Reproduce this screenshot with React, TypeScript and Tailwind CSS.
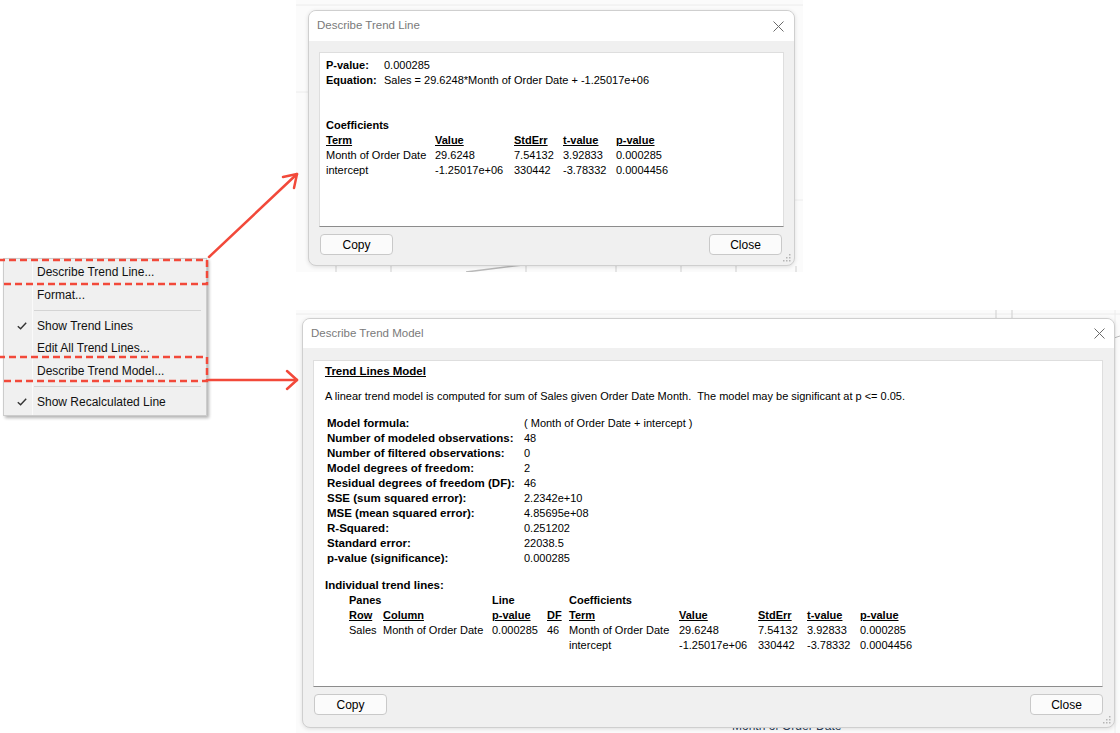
import React from "react";

const font = { fontFamily: '"Liberation Sans", Arial, sans-serif' };

function CloseGlyph() {
  return (
    <svg width="11" height="11" viewBox="0 0 11 11" className="block">
      <path d="M0.5 0.5 L10.5 10.5 M10.5 0.5 L0.5 10.5" stroke="#6a6a6a" strokeWidth="1" />
    </svg>
  );
}

function Grip() {
  return (
    <svg width="8" height="8" viewBox="0 0 8 8" className="absolute bottom-[3px] right-[3px]">
      <rect x="6" y="0" width="1.5" height="1.5" fill="#b5b5b5" />
      <rect x="3" y="3" width="1.5" height="1.5" fill="#b5b5b5" />
      <rect x="6" y="3" width="1.5" height="1.5" fill="#b5b5b5" />
      <rect x="0" y="6" width="1.5" height="1.5" fill="#b5b5b5" />
      <rect x="3" y="6" width="1.5" height="1.5" fill="#b5b5b5" />
      <rect x="6" y="6" width="1.5" height="1.5" fill="#b5b5b5" />
    </svg>
  );
}

function Check() {
  return (
    <svg width="10" height="8" viewBox="0 0 10 8" className="block">
      <path d="M0.8 4.2 L3.6 6.8 L9.2 0.8" fill="none" stroke="#333" strokeWidth="1.4" />
    </svg>
  );
}

function DlgButton({ label }: { label: string }) {
  return (
    <button
      type="button"
      className="h-[21px] w-[73px] rounded-[4px] border border-[#c9c9c9] bg-[#fbfbfb] text-[12px] text-black"
    >
      {label}
    </button>
  );
}

const menuItems = [
  { label: "Describe Trend Line...", checked: false },
  { label: "Format...", checked: false, sepAfter: true },
  { label: "Show Trend Lines", checked: true },
  { label: "Edit All Trend Lines...", checked: false },
  { label: "Describe Trend Model...", checked: false, sepAfter: true },
  { label: "Show Recalculated Line", checked: true },
];

const stats = [
  ["Model formula:", "( Month of Order Date + intercept )"],
  ["Number of modeled observations:", "48"],
  ["Number of filtered observations:", "0"],
  ["Model degrees of freedom:", "2"],
  ["Residual degrees of freedom (DF):", "46"],
  ["SSE (sum squared error):", "2.2342e+10"],
  ["MSE (mean squared error):", "4.85695e+08"],
  ["R-Squared:", "0.251202"],
  ["Standard error:", "22038.5"],
  ["p-value (significance):", "0.000285"],
];

function ContextMenu() {
  return (
    <div className="absolute left-[3px] top-[258px] w-[204px] border border-[#cccccc] bg-[#f0f0f0] py-[2px] shadow-[2px_2px_3px_rgba(0,0,0,0.3)]">
      <div className="absolute bottom-0 left-[28px] top-0 w-px bg-[#fafafa]" />
      {menuItems.map((it) => (
        <div key={it.label}>
          <div className="relative flex h-[22.5px] items-center text-[12px] text-[#111]">
            <div className="flex w-[33px] justify-center pl-[2px]">{it.checked && <Check />}</div>
            <span>{it.label}</span>
          </div>
          {it.sepAfter && (
            <div className="flex h-[8.5px] items-center pl-[30px] pr-[5px]">
              <div className="h-px w-full bg-[#d4d4d4]" />
            </div>
          )}
        </div>
      ))}
    </div>
  );
}

function TrendLineDialog() {
  const h = "font-bold underline";
  return (
    <div className="absolute left-[308px] top-[10px] flex h-[256px] w-[487px] flex-col overflow-hidden rounded-[8px] border border-[#cfcfcf] bg-[#f0f0f0] shadow-[0_1px_4px_rgba(0,0,0,0.12)]">
      <div className="flex h-[30px] items-center justify-between bg-white pl-[8px] pr-[10px]">
        <span className="text-[11.5px] text-[#7a7a7a]">Describe Trend Line</span>
        <CloseGlyph />
      </div>
      <div className="flex flex-col px-[10px] pt-[11px]">
        <div className="h-[175px] border border-[#dedede] border-b-[#8c8c8c] bg-white px-[6px] pt-[5px] text-[11px] leading-[15px] text-black">
          <div className="flex">
            <span className="w-[58px] font-bold">P-value:</span>
            <span>0.000285</span>
          </div>
          <div className="flex">
            <span className="w-[58px] font-bold">Equation:</span>
            <span>Sales = 29.6248*Month of Order Date + -1.25017e+06</span>
          </div>
          <div className="h-[30px]" />
          <div className="font-bold">Coefficients</div>
          <div className="grid grid-cols-[109px_79px_49px_53px_auto]">
            <span className={h}>Term</span>
            <span className={h}>Value</span>
            <span className={h}>StdErr</span>
            <span className={h}>t-value</span>
            <span className={h}>p-value</span>
            <span>Month of Order Date</span>
            <span>29.6248</span>
            <span>7.54132</span>
            <span>3.92833</span>
            <span>0.000285</span>
            <span>intercept</span>
            <span>-1.25017e+06</span>
            <span>330442</span>
            <span>-3.78332</span>
            <span>0.0004456</span>
          </div>
        </div>
        <div className="mt-[7px] flex justify-between pl-[1px] pr-[2px]">
          <DlgButton label="Copy" />
          <DlgButton label="Close" />
        </div>
      </div>
      <Grip />
    </div>
  );
}

function TrendModelDialog() {
  const h = "font-bold underline";
  return (
    <div className="absolute left-[302px] top-[318px] flex h-[410px] w-[813px] flex-col overflow-hidden rounded-[8px] border border-[#cfcfcf] bg-[#f0f0f0] shadow-[0_1px_4px_rgba(0,0,0,0.12)]">
      <div className="flex h-[29px] items-center justify-between bg-white pl-[8px] pr-[9px]">
        <span className="text-[11.5px] text-[#7a7a7a]">Describe Trend Model</span>
        <CloseGlyph />
      </div>
      <div className="flex flex-col pl-[10px] pr-[11px] pt-[12px]">
        <div className="h-[327px] border border-[#dedede] border-b-[#8c8c8c] bg-white pl-[11px] pt-[3px] text-[11px] leading-[15px] text-black">
          <div className="text-[11.5px] font-bold underline">Trend Lines Model</div>
          <div className="mt-[10px]">
            A linear trend model is computed for sum of Sales given Order Date Month.&nbsp; The model may be significant at p &lt;= 0.05.
          </div>
          <div className="mt-[12px] pl-[2px]">
            {stats.map(([k, v]) => (
              <div key={k} className="flex">
                <span className="w-[197px] text-[11.5px] font-bold">{k}</span>
                <span>{v}</span>
              </div>
            ))}
          </div>
          <div className="mt-[12px] text-[11.5px] font-bold">Individual trend lines:</div>
          <div className="grid grid-cols-[34px_109px_55px_22px_110px_79px_49px_53px_auto] pl-[24px]">
            <span className="col-span-2 font-bold">Panes</span>
            <span className="col-span-2 font-bold">Line</span>
            <span className="col-span-5 font-bold">Coefficients</span>
            <span className={h}>Row</span>
            <span className={h}>Column</span>
            <span className={h}>p-value</span>
            <span className={h}>DF</span>
            <span className={h}>Term</span>
            <span className={h}>Value</span>
            <span className={h}>StdErr</span>
            <span className={h}>t-value</span>
            <span className={h}>p-value</span>
            <span>Sales</span>
            <span>Month of Order Date</span>
            <span>0.000285</span>
            <span>46</span>
            <span>Month of Order Date</span>
            <span>29.6248</span>
            <span>7.54132</span>
            <span>3.92833</span>
            <span>0.000285</span>
            <span />
            <span />
            <span />
            <span />
            <span>intercept</span>
            <span>-1.25017e+06</span>
            <span>330442</span>
            <span>-3.78332</span>
            <span>0.0004456</span>
          </div>
        </div>
        <div className="mt-[7px] flex justify-between pl-[1px]">
          <DlgButton label="Copy" />
          <DlgButton label="Close" />
        </div>
      </div>
      <Grip />
    </div>
  );
}

export default function App() {
  return (
    <div className="relative h-[733px] w-[1120px] overflow-hidden bg-white" style={font}>
      {/* backdrop crops behind the dialogs */}
      <div className="absolute left-[296px] top-0 h-[272px] w-[507px] bg-[#fbfbfb]">
        <svg width="507" height="272" className="absolute inset-0">
          <path d="M0 5 H507 M0 92 H12 M495 200 H507" stroke="#ececec" strokeWidth="1" />
          <path d="M40 266 V272 M95 266 V272 M230 266 V272 M320 266 V272 M385 266 V272 M440 266 V272 M500 266 V272" stroke="#cfcfcf" strokeWidth="1" />
          <path d="M170 272 L235 264" stroke="#b9b9b9" strokeWidth="1.5" />
        </svg>
      </div>
      <div className="absolute left-[296px] top-[310px] h-[423px] w-[824px] bg-[#fbfbfb]">
        <svg width="824" height="423" className="absolute inset-0">
          <path d="M0 4 H824 M819 0 V423" stroke="#ececec" strokeWidth="1" />
          <path d="M700 0 V8 M716 0 V8" stroke="#cfcfcf" strokeWidth="1" />
          <path d="M812 30 L824 26" stroke="#b9b9b9" strokeWidth="1" />
        </svg>
        <span className="absolute left-[436px] top-[410px] text-[12px] leading-[12px] text-[#2d3e5a]">Month of Order Date</span>
      </div>

      <TrendLineDialog />
      <TrendModelDialog />
      <ContextMenu />

      {/* annotations */}
      <svg width="1120" height="733" className="pointer-events-none absolute inset-0">
        <g fill="none" stroke="#f2493a" strokeWidth="2.5" strokeDasharray="7 4">
          <rect x="-2" y="260" width="209" height="24" />
          <rect x="-2" y="357" width="209" height="24" />
        </g>
        <g fill="none" stroke="#f2493a" strokeWidth="2.5" strokeLinecap="round">
          <path d="M209 257 L297 174" />
          <path d="M297 174 L283 177 M297 174 L294 188" />
          <path d="M209 380 L297 380" />
          <path d="M297 380 L287 371 M297 380 L287 389" />
        </g>
      </svg>
    </div>
  );
}
